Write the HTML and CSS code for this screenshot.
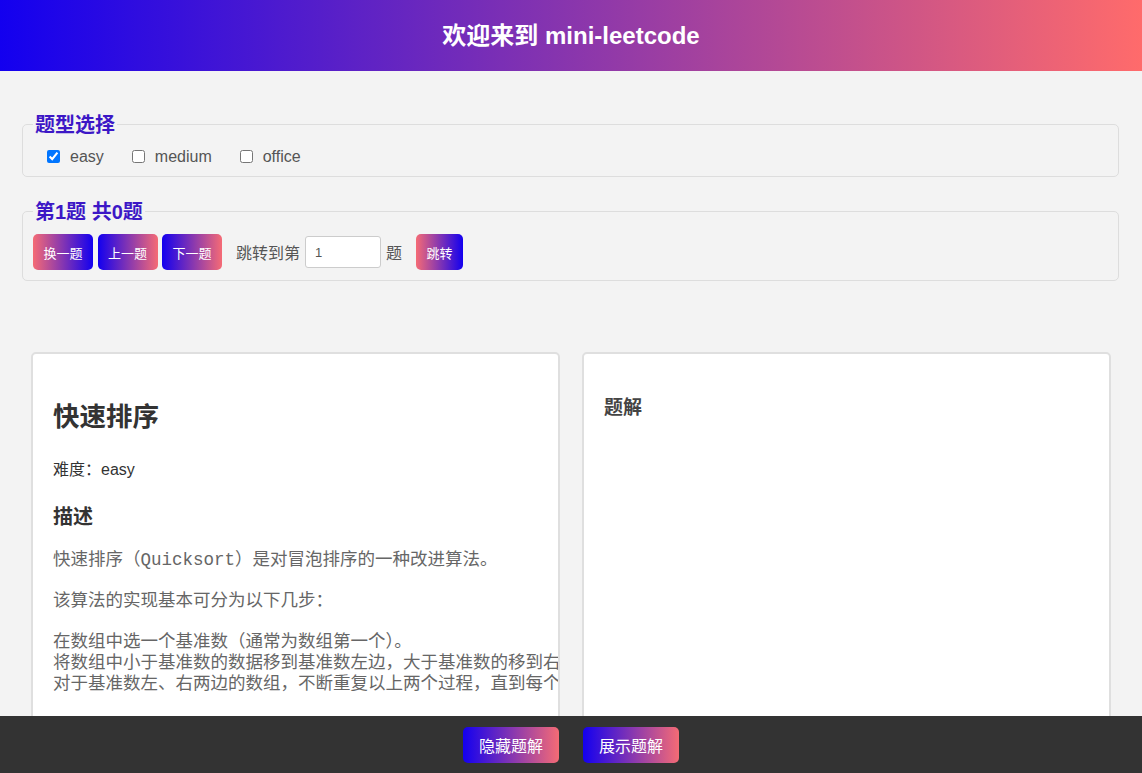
FILE: index.html
```html
<!DOCTYPE html>
<html lang="zh-CN">
<head>
<meta charset="utf-8">
<title>mini-leetcode</title>
<link rel="stylesheet" href="styles.css">
</head>
<body>
<header class="topbar">
  <h1 class="title">欢迎来到 mini-leetcode</h1>
</header>
<main class="main">
  <fieldset class="panel panel-types">
    <legend class="legend">题型选择</legend>
    <div class="opt-row">
      <label class="opt"><input class="check" type="checkbox" checked>easy</label>
      <label class="opt"><input class="check" type="checkbox">medium</label>
      <label class="opt"><input class="check" type="checkbox">office</label>
    </div>
  </fieldset>
  <fieldset class="panel panel-nav">
    <legend class="legend">第1题 共0题</legend>
    <div class="nav-row">
      <div class="btn-group">
        <button class="btn btn-rev">换一题</button>
        <button class="btn btn-fwd">上一题</button>
        <button class="btn btn-fwd">下一题</button>
      </div>
      <span class="jump-text">跳转到第</span>
      <input class="jump-input" type="text" value="1">
      <span class="jump-text">题</span>
      <button class="btn btn-rev btn-jump">跳转</button>
    </div>
  </fieldset>
  <section class="cards">
    <article class="card">
      <h2 class="prob-title">快速排序</h2>
      <p class="difficulty">难度：easy</p>
      <h3 class="sub-title">描述</h3>
      <pre class="desc">快速排序（Quicksort）是对冒泡排序的一种改进算法。

该算法的实现基本可分为以下几步：

在数组中选一个基准数（通常为数组第一个）。
将数组中小于基准数的数据移到基准数左边，大于基准数的移到右边。
对于基准数左、右两边的数组，不断重复以上两个过程，直到每个子集只有一个元素。</pre>
    </article>
    <article class="card">
      <h3 class="sol-title">题解</h3>
    </article>
  </section>
</main>
<footer class="bottombar">
  <button class="btn btn-fwd btn-big">隐藏题解</button>
  <button class="btn btn-fwd btn-big">展示题解</button>
</footer>
</body>
</html>
```
FILE: styles.css
```css
* { box-sizing: border-box; }

html, body {
  margin: 0;
  padding: 0;
}

body {
  background: #f3f3f3;
  font-family: "Liberation Sans", Arial, "Noto Sans CJK SC", sans-serif;
  color: #333;
  min-height: 800px;
}

.topbar {
  height: 71px;
  display: flex;
  align-items: center;
  justify-content: center;
  background: linear-gradient(to right, #1300ef, #ff6b6b);
}

.title {
  margin: 0;
  color: #fff;
  font-size: 24px;
  font-weight: bold;
  line-height: 30px;
}

.main {
  padding: 0 23px 0 22px;
}

.panel {
  margin: 0;
  min-width: 0;
  border: 1px solid #dddddd;
  border-radius: 5px;
  padding: 10px 10px 10px 10px;
}

.panel-types {
  margin-top: 41px;
}

.panel-nav {
  margin-top: 22px;
  padding-top: 11px;
}

.legend {
  padding: 0 2px;
  font-size: 20px;
  line-height: 24px;
  font-weight: bold;
  color: #3c17c6;
  position: relative;
  top: 1px;
}

.opt-row {
  display: flex;
  align-items: center;
  height: 20px;
  padding-top: 1px;
}

.opt {
  display: inline-flex;
  align-items: center;
  margin-left: 10px;
  margin-right: 14px;
  font-size: 16px;
  line-height: 20px;
  color: #555;
}

.check {
  margin: 0 10px 0 4px;
  width: 13px;
  height: 13px;
}

.nav-row {
  display: flex;
  align-items: center;
}

.btn-group {
  display: flex;
  gap: 4.5px;
  margin-right: 14px;
}

.btn {
  border: none;
  border-radius: 5px;
  color: #fff;
  font-family: "Liberation Sans", Arial, "Noto Sans CJK SC", sans-serif;
  font-size: 13px;
  height: 36px;
  width: 60px;
  padding: 0;
  cursor: pointer;
}

.btn-fwd {
  background: linear-gradient(to right, #1300ef, #f56b75);
}

.btn-rev {
  background: linear-gradient(to right, #f56b75, #1300ef);
}

.btn-jump {
  width: 47px;
  margin-left: 14px;
}

.jump-text {
  font-size: 16px;
  color: #555;
}

.jump-input {
  width: 76px;
  height: 32px;
  margin: 0 5px;
  border: 1px solid #cccccc;
  border-radius: 3px;
  padding: 0 9px;
  font-size: 13px;
  color: #555;
  background: #fff;
  font-family: "Liberation Sans", Arial, sans-serif;
}

.cards {
  margin-top: 71px;
  padding: 0 8px 0 9px;
  display: grid;
  grid-template-columns: 1fr 1fr;
  gap: 22px;
}

.card {
  background: #fff;
  border: 2px solid #dfdfdf;
  border-radius: 5px;
  padding: 20px 20px 0;
  min-height: 430px;
  overflow: hidden;
}

.prob-title {
  margin: 28px 0 28px;
  font-size: 26.5px;
  line-height: 30px;
  font-weight: bold;
  color: #333;
}

.difficulty {
  margin: 0;
  font-size: 16px;
  line-height: 20px;
  color: #333;
}

.sub-title {
  margin: 25px 0 21px;
  font-size: 20px;
  line-height: 24px;
  font-weight: bold;
  color: #333;
}

.desc {
  margin: 0;
  font-family: "Liberation Mono", "Noto Sans CJK SC", monospace;
  font-size: 17.5px;
  line-height: 20.6px;
  color: #666;
  white-space: pre;
}

.sol-title {
  margin: 23px 0 0;
  font-size: 19px;
  line-height: 22px;
  font-weight: bold;
  color: #444;
}

.bottombar {
  position: fixed;
  left: 0;
  right: 0;
  bottom: 0;
  height: 57px;
  background: #333;
  display: flex;
  align-items: center;
  justify-content: center;
  gap: 24px;
}

.btn-big {
  width: 96px;
  font-size: 16px;
}
```
